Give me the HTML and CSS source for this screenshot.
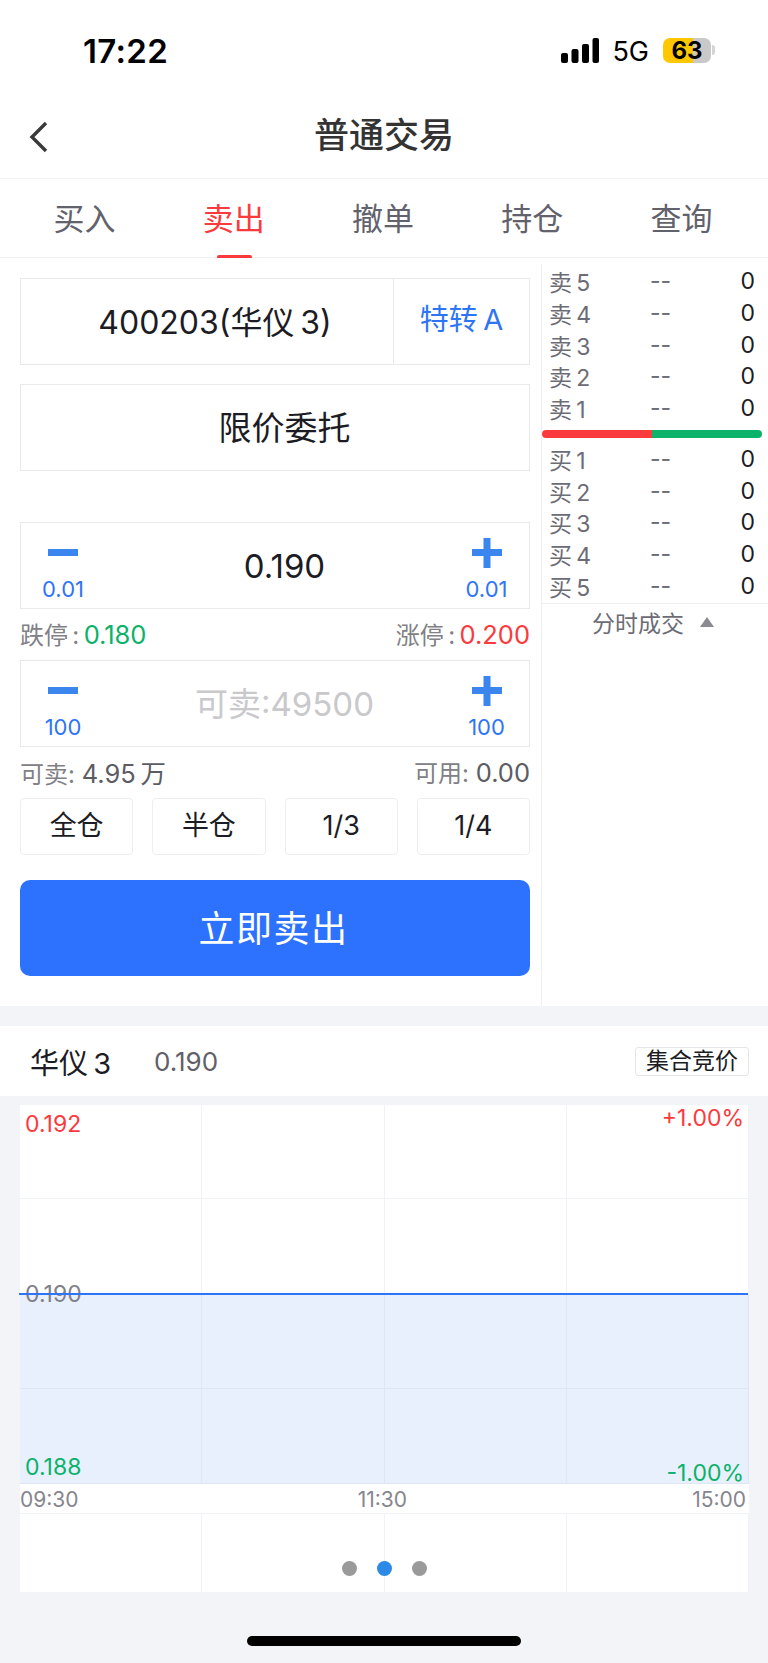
FILE: index.html
```html
<!DOCTYPE html>
<html lang="zh-CN">
<head>
    <meta charset="UTF-8">
    <meta name="viewport" content="width=device-width, initial-scale=1.0">
    <title>普通交易</title>
    <link rel="stylesheet" href="styles.css">
</head>
<body>
    <!-- Status bar -->
    <div class="status-bar">
        <span class="time">17:22</span>
        <div class="status-right">
            <svg class="signal" width="38" height="25" viewBox="0 0 38 25">
                <rect x="0" y="15" width="7" height="10" rx="2"/>
                <rect x="10.5" y="11" width="7" height="14" rx="2"/>
                <rect x="21" y="6" width="7" height="19" rx="2"/>
                <rect x="31.5" y="0" width="6.5" height="25" rx="2"/>
            </svg>
            <span class="network">5G</span>
            <div class="battery"><span class="battery-level">63</span></div>
            <div class="battery-nub"></div>
        </div>
    </div>

    <!-- Title -->
    <div class="nav-bar">
        <svg class="back" width="22" height="32" viewBox="0 0 22 32">
            <path d="M18 2 L4 16 L18 30" fill="none" stroke="#3a3a3c" stroke-width="3.4"/>
        </svg>
        <h1 class="nav-title">普通交易</h1>
    </div>

    <!-- Tabs -->
    <div class="tabs">
        <div class="tab">买入</div>
        <div class="tab active">卖出</div>
        <div class="tab">撤单</div>
        <div class="tab">持仓</div>
        <div class="tab">查询</div>
    </div>

    <div class="trade">
        <div class="order-form">
            <div class="field stock-field">
                <div class="stock-name">400203(华仪&thinsp;3)</div>
                <div class="stock-type">特转&thinsp;A</div>
            </div>
            <div class="field order-type">限价委托</div>

            <div class="field stepper price-stepper">
                <div class="step">
                    <svg class="step-icon" width="30" height="30" viewBox="0 0 30 30"><rect x="0" y="11" width="30" height="7"/></svg>
                    <span class="step-size">0.01</span>
                </div>
                <div class="step-value">0.190</div>
                <div class="step">
                    <svg class="step-icon" width="30" height="30" viewBox="0 0 30 30"><rect x="0" y="11" width="30" height="7"/><rect x="11.5" y="0" width="7" height="30"/></svg>
                    <span class="step-size">0.01</span>
                </div>
            </div>

            <div class="info-row">
                <span>跌停&thinsp;:&thinsp;<b class="green">0.180</b></span>
                <span>涨停&thinsp;:&thinsp;<b class="red">0.200</b></span>
            </div>

            <div class="field stepper">
                <div class="step">
                    <svg class="step-icon" width="30" height="30" viewBox="0 0 30 30"><rect x="0" y="11" width="30" height="7"/></svg>
                    <span class="step-size">100</span>
                </div>
                <div class="step-value placeholder">可卖:49500</div>
                <div class="step">
                    <svg class="step-icon" width="30" height="30" viewBox="0 0 30 30"><rect x="0" y="11" width="30" height="7"/><rect x="11.5" y="0" width="7" height="30"/></svg>
                    <span class="step-size">100</span>
                </div>
            </div>

            <div class="info-row">
                <span>可卖: <b>4.95&thinsp;万</b></span>
                <span>可用: <b>0.00</b></span>
            </div>

            <div class="ratio-row">
                <div class="ratio">全仓</div>
                <div class="ratio">半仓</div>
                <div class="ratio">1/3</div>
                <div class="ratio">1/4</div>
            </div>

            <button class="sell-button">立即卖出</button>
        </div>

        <!-- Order book -->
        <div class="book">
            <div class="book-rows">
                <div class="book-row"><span>卖&thinsp;5</span><span>--</span><b>0</b></div>
                <div class="book-row"><span>卖&thinsp;4</span><span>--</span><b>0</b></div>
                <div class="book-row"><span>卖&thinsp;3</span><span>--</span><b>0</b></div>
                <div class="book-row"><span>卖&thinsp;2</span><span>--</span><b>0</b></div>
                <div class="book-row"><span>卖&thinsp;1</span><span>--</span><b>0</b></div>
            </div>
            <div class="book-bar">
                <div class="bar-sell"></div>
                <div class="bar-buy"></div>
            </div>
            <div class="book-rows">
                <div class="book-row"><span>买&thinsp;1</span><span>--</span><b>0</b></div>
                <div class="book-row"><span>买&thinsp;2</span><span>--</span><b>0</b></div>
                <div class="book-row"><span>买&thinsp;3</span><span>--</span><b>0</b></div>
                <div class="book-row"><span>买&thinsp;4</span><span>--</span><b>0</b></div>
                <div class="book-row"><span>买&thinsp;5</span><span>--</span><b>0</b></div>
            </div>
            <div class="book-toggle">
                <span>分时成交</span>
                <i class="triangle"></i>
            </div>
        </div>
    </div>

    <!-- Quote header -->
    <div class="quote">
        <span class="quote-name">华仪&thinsp;3</span>
        <span class="quote-price">0.190</span>
        <span class="quote-tag">集合竞价</span>
    </div>

    <!-- Intraday chart -->
    <div class="chart">
        <div class="plot">
            <div class="cell"></div><div class="cell"></div><div class="cell"></div><div class="cell"></div>
            <div class="cell"></div><div class="cell"></div><div class="cell"></div><div class="cell"></div>
            <div class="cell fill"></div><div class="cell fill"></div><div class="cell fill"></div><div class="cell fill"></div>
            <div class="cell fill"></div><div class="cell fill"></div><div class="cell fill"></div><div class="cell fill"></div>
            <span class="label high">0.192</span>
            <span class="label high-pct">+1.00%</span>
            <span class="label mid">0.190</span>
            <span class="label low">0.188</span>
            <span class="label low-pct">-1.00%</span>
            <div class="last-price"></div>
        </div>
        <div class="axis">
            <span>09:30</span>
            <span class="axis-mid">11:30</span>
            <span>15:00</span>
        </div>
        <div class="volume">
            <div class="volume-cell"></div><div class="volume-cell"></div><div class="volume-cell"></div><div class="volume-cell"></div>
            <div class="dots">
                <i class="dot"></i>
                <i class="dot current"></i>
                <i class="dot"></i>
            </div>
        </div>
    </div>

    <div class="home-bar"></div>
</body>
</html>
```

FILE: styles.css
```css
html, body {
    margin: 0;
    height: 100%;
}

body {
    width: 768px;
    height: 1663px;
    overflow: hidden;
    background-color: #f2f4f8;
    color: #1c1c24;
    font-family: Inter, "Noto Sans CJK SC", sans-serif;
}

b {
    font-weight: 400;
}

.green {
    color: #0ab26a;
}

.red {
    color: #fb3a3e;
}

/* Status bar */
.status-bar {
    height: 90px;
    background-color: #fff;
    display: flex;
    justify-content: space-between;
    padding: 0 53px 0 83px;
    box-sizing: border-box;
}

.time {
    margin-top: 32px;
    font-size: 33px;
    line-height: 38px;
    font-weight: 600;
    letter-spacing: 0.3px;
    color: #000;
}

.status-right {
    display: flex;
    align-items: flex-start;
    padding-top: 38px;
}

.signal {
    margin-right: 1px;
}

.network {
    margin-left: 12px;
    font-size: 27px;
    line-height: 28px;
    color: #000;
}

.battery {
    width: 48px;
    height: 25px;
    margin-left: 14px;
    border-radius: 7px;
    background: linear-gradient(to right, #ffc700 62%, #c9c9c9 62%);
    text-align: center;
}

.battery-level {
    font-size: 24px;
    line-height: 25px;
    font-weight: 700;
    color: #000;
    display: block;
}

.battery-nub {
    width: 3px;
    height: 10px;
    margin: 7px 0 0 1px;
    border-radius: 0 3px 3px 0;
    background-color: #d4d4d4;
}

/* Title bar */
.nav-bar {
    height: 89px;
    background-color: #fff;
    border-bottom: 1px solid #f3f3f5;
    box-sizing: border-box;
    display: flex;
    align-items: center;
    justify-content: center;
    position: relative;
}

.back {
    position: absolute;
    left: 28px;
    top: 31px;
}

.nav-title {
    margin: 0 0 3px;
    font-size: 35px;
    font-weight: 500;
    color: #333;
}

/* Tabs */
.tabs {
    height: 79px;
    padding: 0 12px 0 10px;
    background-color: #fff;
    border-bottom: 1px solid #f1f1f4;
    box-sizing: border-box;
    display: grid;
    grid-template-columns: repeat(5, 1fr);
}

.tab {
    padding-top: 18px;
    font-size: 31px;
    line-height: 44px;
    text-align: center;
    color: #62626c;
    position: relative;
}

.tab.active {
    color: #fb3a3e;
}

.tab.active::after {
    content: "";
    position: absolute;
    left: 58px;
    bottom: -1px;
    width: 35px;
    height: 3px;
    border-radius: 2px 2px 0 0;
    background-color: #fb3a3e;
}

/* Trade panel */
.trade {
    display: flex;
    height: 748px;
    background-color: #fff;
}

.order-form {
    width: 541px;
    padding: 20px 11px 0 20px;
    box-sizing: border-box;
}

.field {
    height: 87px;
    border: 1px solid #e9e9ec;
    box-sizing: border-box;
}

.stock-field {
    display: flex;
}

.stock-name {
    width: 373px;
    padding-left: 16px;
    border-right: 1px solid #e9e9ec;
    box-sizing: border-box;
    font-size: 32px;
    line-height: 87px;
    text-align: center;
}

.stock-type {
    flex: 1;
    font-size: 29px;
    line-height: 81px;
    text-align: center;
    color: #2e75f6;
}

.order-type {
    margin-top: 19px;
    padding-left: 19px;
    font-size: 33px;
    line-height: 87px;
    text-align: center;
}

.stepper {
    display: grid;
    grid-template-columns: 85px 1fr 85px;
}

.price-stepper {
    margin-top: 51px;
}

.step {
    display: flex;
    flex-direction: column;
    align-items: center;
    padding-top: 15px;
    padding-right: 1px;
}

.step:last-child {
    padding-right: 0;
}

.step-icon {
    fill: #3a86ee;
}

.step-size {
    margin-top: 6px;
    font-size: 22px;
    line-height: 30px;
    color: #2e75f6;
}

.step-value {
    padding-left: 19px;
    font-size: 33px;
    line-height: 86px;
    text-align: center;
}

.placeholder {
    color: #c9c9cc;
    white-space: nowrap;
}

.info-row {
    height: 51px;
    padding-bottom: 3px;
    box-sizing: border-box;
    display: flex;
    justify-content: space-between;
    align-items: center;
    font-size: 24px;
    color: #808086;
}

.info-row b {
    font-size: 25.5px;
    color: #5c5c64;
}

.info-row b.green {
    color: #0ab26a;
}

.info-row b.red {
    color: #fb3a3e;
}

.ratio-row {
    display: grid;
    grid-template-columns: repeat(4, 1fr);
    column-gap: 19px;
}

.ratio {
    height: 57px;
    border: 1px solid #eeeef0;
    border-radius: 4px;
    box-sizing: border-box;
    font-size: 27px;
    line-height: 54px;
    text-align: center;
}

.sell-button {
    display: block;
    width: 100%;
    height: 96px;
    margin-top: 25px;
    border: none;
    border-radius: 10px;
    background-color: #2d72ff;
    color: #fff;
    font-family: inherit;
    font-size: 36px;
    letter-spacing: 1.5px;
    padding: 0 3px 4px 0;
}

/* Order book */
.book {
    flex: 1;
    margin-top: 6px;
    border-left: 1px solid #efeff2;
}

.book-row {
    height: 31.75px;
    padding: 0 13px 0 7px;
    display: grid;
    grid-template-columns: 101px 1fr auto;
    align-items: center;
    font-size: 23px;
    color: #6c6c76;
}

.book-row b {
    color: #1c1c24;
}

.book-bar {
    display: flex;
    height: 8px;
    margin: 7px 6px 4px 0;
    border-radius: 4px;
    overflow: hidden;
}

.bar-sell {
    width: 50%;
    background-color: #fb3a3e;
}

.bar-buy {
    width: 50%;
    background-color: #0ab26a;
}

.book-toggle {
    height: 42px;
    margin-top: 2px;
    padding: 0 0 4px 50px;
    border-top: 1px solid #efeff2;
    box-sizing: border-box;
    display: flex;
    align-items: center;
    font-size: 23px;
    color: #6c6c76;
}

.triangle {
    width: 0;
    height: 0;
    margin-left: 16px;
    border-left: 7.5px solid transparent;
    border-right: 7.5px solid transparent;
    border-bottom: 10px solid #8a8a90;
}

/* Quote header */
.quote {
    height: 70px;
    margin-top: 20px;
    padding: 0 19px 0 30px;
    background-color: #fff;
    display: flex;
    align-items: center;
}

.quote-name {
    width: 124px;
    font-size: 29px;
}

.quote-price {
    font-size: 26px;
    color: #5f6068;
}

.quote-tag {
    margin-left: auto;
    width: 114px;
    height: 29px;
    border: 1px solid #e6e6ea;
    border-radius: 3px;
    box-sizing: border-box;
    font-size: 23px;
    line-height: 27px;
    text-align: center;
}

/* Intraday chart */
.chart {
    width: 729px;
    margin: 9px 0 0 20px;
    background-color: #fff;
}

.plot {
    display: grid;
    grid-template-columns: repeat(4, 1fr);
    grid-template-rows: 94px 95px 95px 95px;
    position: relative;
}

.cell {
    border-right: 1px solid #f1f2f5;
    border-bottom: 1px solid #f1f2f5;
    box-sizing: border-box;
}

.cell.fill {
    background-color: #e8effd;
    border-color: #dfe6f3;
}

.last-price {
    position: absolute;
    left: -1px;
    right: 1px;
    top: 188px;
    height: 2px;
    background-color: #2f74f6;
}

.label {
    position: absolute;
    font-size: 23px;
    line-height: 26px;
}

.high {
    left: 5px;
    top: 6px;
    color: #fb3a3e;
}

.high-pct {
    right: 5px;
    top: 0;
    color: #fb3a3e;
}

.mid {
    left: 5px;
    top: 176px;
    color: #808086;
}

.low {
    left: 5px;
    top: 349px;
    color: #0ab26a;
}

.low-pct {
    right: 5px;
    top: 355px;
    color: #0ab26a;
}

.axis {
    height: 30px;
    display: flex;
    justify-content: space-between;
    padding-right: 3px;
    border-bottom: 1px solid #f1f2f5;
    box-sizing: border-box;
    font-size: 21px;
    line-height: 31px;
    color: #86868e;
}

.axis-mid {
    padding-right: 6px;
}

.volume {
    height: 78px;
    display: grid;
    grid-template-columns: repeat(4, 1fr);
    position: relative;
}

.volume-cell {
    border-right: 1px solid #f1f2f5;
}

.dots {
    position: absolute;
    left: 322px;
    top: 47px;
    display: flex;
    gap: 20px;
}

.dot {
    width: 15px;
    height: 15px;
    border-radius: 50%;
    background-color: #9a9a9a;
}

.dot.current {
    background-color: #2a8ae6;
}

.home-bar {
    width: 274px;
    height: 10px;
    margin: 44px auto 0;
    border-radius: 5px;
    background-color: #000;
}
```
